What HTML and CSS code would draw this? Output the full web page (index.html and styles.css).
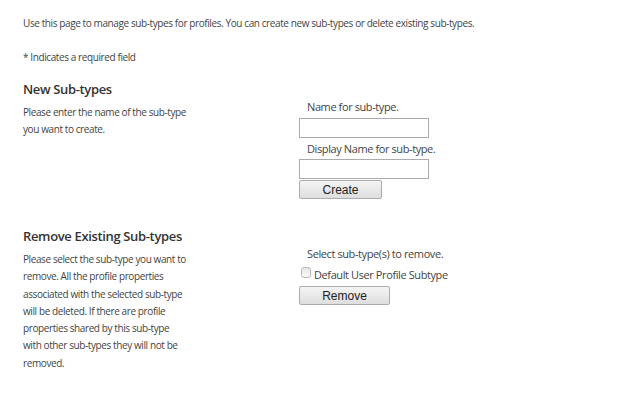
FILE: index.html
```html
<!DOCTYPE html>
<html lang="en">
<head>
    <meta charset="UTF-8">
    <title>Manage Sub-types</title>
    <link rel="stylesheet" href="styles.css">
</head>
<body>
    <p class="intro">Use this page to manage sub-types for profiles. You can create new sub-types or delete existing sub-types.</p>
    <p class="required">* Indicates a required field</p>

    <div class="section new-section">
        <div class="left">
            <h2>New Sub-types</h2>
            <p class="desc">Please enter the name of the sub-type you want to create.</p>
        </div>
        <div class="right">
            <label class="field-label" for="subName">Name for sub-type.</label>
            <input type="text" id="subName" class="text-box">
            <label class="field-label" for="displayName">Display Name for sub-type.</label>
            <input type="text" id="displayName" class="text-box last-box">
            <button class="btn create-btn">Create</button>
        </div>
    </div>

    <div class="section remove-section">
        <div class="left">
            <h2>Remove Existing Sub-types</h2>
            <p class="desc">Please select the sub-type you want to remove. All the profile properties associated with the selected sub-type will be deleted. If there are profile properties shared by this sub-type<br>with other sub-types they will not be removed.</p>
        </div>
        <div class="right">
            <span class="field-label">Select sub-type(s) to remove.</span>
            <label class="check-row"><input type="checkbox" class="check">Default User Profile Subtype</label>
            <button class="btn remove-btn">Remove</button>
        </div>
    </div>
</body>
</html>
```

FILE: styles.css
```css
body {
    margin: 0;
    padding: 0 0 0 23px;
    background: #fff;
    font-family: "Segoe UI", "Open Sans", sans-serif;
    font-size: 10px;
    letter-spacing: -0.04em;
    color: #444;
}
p {
    margin: 0;
}
.intro {
    padding-top: 15px;
    line-height: 16px;
}
.required {
    margin-top: 18px;
    line-height: 16px;
}
.section {
    display: flex;
}
.left {
    width: 276px;
}
.left h2 {
    margin: 0;
    font-size: 13px;
    font-weight: 600;
    letter-spacing: -0.35px;
    color: #333;
    line-height: 20px;
}
.desc {
    width: 170px;
    line-height: 17px;
    margin-top: 5px;
}
.remove-section .desc {
    line-height: 17.3px;
}
.new-section {
    margin-top: 14px;
}
.remove-section {
    margin-top: 27px;
}
.right {
    display: flex;
    flex-direction: column;
    align-items: flex-start;
    font-size: 11px;
    padding-top: 20px;
}
.field-label {
    padding-left: 8px;
    line-height: 16px;
}
.text-box {
    width: 130px;
    height: 20px;
    box-sizing: border-box;
    border: 1px solid #ababab;
    margin: 3px 0 3px;
    padding: 0 2px;
}
.last-box {
    margin: 2px 0 1px;
}
.btn {
    font-family: "Liberation Sans", Arial, sans-serif;
    font-size: 12px;
    letter-spacing: 0;
    color: #222;
    height: 19px;
    padding: 0;
    border: 1px solid #acacac;
    border-radius: 2px;
    background: linear-gradient(#f4f4f4, #dedede);
}
.create-btn {
    width: 83px;
}
.remove-btn {
    width: 91px;
    margin-top: 3px;
}
.check-row {
    display: flex;
    align-items: flex-start;
    margin-top: 5px;
    line-height: 16px;
}
.check {
    appearance: none;
    margin: 0 3px 0 2px;
    width: 10px;
    height: 11px;
    border: 1px solid #b8b8b8;
    border-radius: 3px;
    background: linear-gradient(#e6e6e6, #fafafa);
}
```
